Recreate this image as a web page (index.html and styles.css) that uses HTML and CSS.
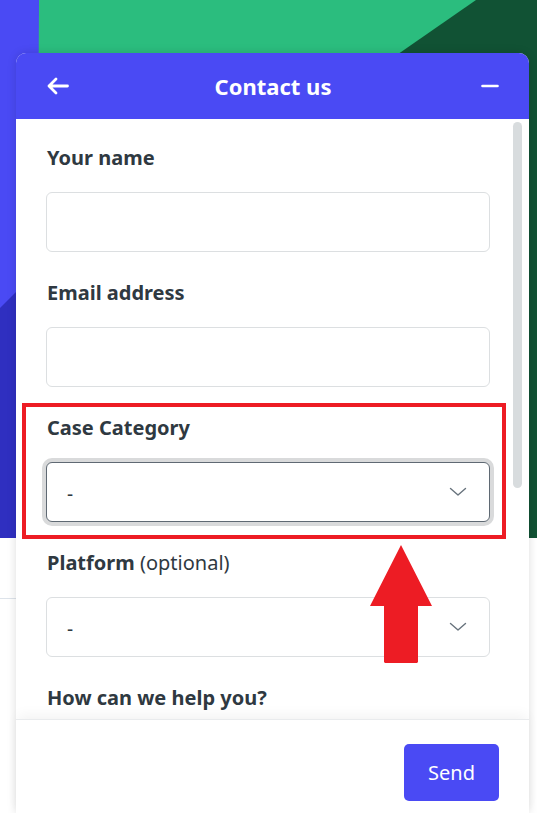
FILE: index.html
```html
<!DOCTYPE html>
<html lang="en">
<head>
<meta charset="utf-8">
<title>Contact us</title>
<link rel="stylesheet" href="styles.css">
</head>
<body>
<div class="page">
  <svg class="backdrop" width="537" height="813" viewBox="0 0 537 813" aria-hidden="true">
    <rect x="0" y="0" width="537" height="538" fill="#2bbd7e"/>
    <polygon points="476,0 537,0 537,538 -300,538" fill="#115234"/>
    <polygon points="0,0 39,0 36,538 0,538" fill="#4a4af4"/>
    <polygon points="0,308 37,271 36,538 0,538" fill="#2f2fc0"/>
    <rect x="0" y="538" width="537" height="275" fill="#ffffff"/>
    <rect x="0" y="598" width="20" height="1" fill="#dde3ea"/>
  </svg>

  <div class="widget">
    <header class="widget-header">
      <button class="icon-btn" aria-label="Back">
        <svg width="22" height="18" viewBox="0 0 22 18"><path d="M20.5 9H2 M9 2 L2 9 L9 16" fill="none" stroke="#fff" stroke-width="2.8" stroke-linecap="round" stroke-linejoin="round"/></svg>
      </button>
      <h1 class="title">Contact us</h1>
      <button class="icon-btn icon-right" aria-label="Minimize">
        <svg width="18" height="18" viewBox="0 0 18 18"><path d="M1.5 9H16.5" fill="none" stroke="#fff" stroke-width="2.6" stroke-linecap="round"/></svg>
      </button>
    </header>

    <div class="widget-body">
      <form class="form">
        <div class="field">
          <label class="label">Your name</label>
          <input class="input" type="text">
        </div>
        <div class="field">
          <label class="label">Email address</label>
          <input class="input" type="email">
        </div>
        <div class="field">
          <label class="label">Case Category</label>
          <div class="select is-focused">
            <span class="select-value">-</span>
            <svg class="chevron" width="18" height="10" viewBox="0 0 18 10"><path d="M1.5 1.5 L9 8 L16.5 1.5" fill="none" stroke="#68737d" stroke-width="1.4" stroke-linecap="round" stroke-linejoin="round"/></svg>
          </div>
        </div>
        <div class="field">
          <label class="label">Platform <span class="optional">(optional)</span></label>
          <div class="select">
            <span class="select-value">-</span>
            <svg class="chevron" width="18" height="10" viewBox="0 0 18 10"><path d="M1.5 1.5 L9 8 L16.5 1.5" fill="none" stroke="#68737d" stroke-width="1.4" stroke-linecap="round" stroke-linejoin="round"/></svg>
          </div>
        </div>
        <div class="field">
          <label class="label">How can we help you?</label>
          <textarea class="input textarea"></textarea>
        </div>
      </form>
      <div class="scrolltrack"><div class="scrollthumb"></div></div>
    </div>

    <footer class="widget-footer">
      <button class="send" type="button">Send</button>
    </footer>
  </div>

  <div class="highlight"></div>
  <svg class="pointer" width="63" height="119" viewBox="0 0 63 119" aria-hidden="true">
    <polygon points="31,0 62,61 48,61 48,117 47,118 15,118 14,117 14,61 0,61" fill="#ed1c24"/>
  </svg>
</div>
</body>
</html>
```

FILE: styles.css
```css
* { box-sizing: border-box; }

html, body {
  margin: 0;
  padding: 0;
  overflow: hidden;
  background: #ffffff;
  font-family: "Noto Sans", "Open Sans", "DejaVu Sans", sans-serif;
  color: #2f3941;
}

.page {
  position: relative;
  width: 537px;
  height: 813px;
  overflow: hidden;
}

.backdrop {
  position: absolute;
  left: 0;
  top: 0;
  display: block;
}

.widget {
  position: relative;
  margin: 53px 0 0 16px;
  width: 513px;
  height: 760px;
  background: #ffffff;
  border-radius: 10px 10px 0 0;
  box-shadow: 0 0 10px rgba(0, 0, 0, 0.14);
  display: flex;
  flex-direction: column;
}

.widget-header {
  height: 66px;
  flex: none;
  background: #4a4af4;
  border-radius: 10px 10px 0 0;
  display: grid;
  grid-template-columns: 1fr auto 1fr;
  align-items: center;
  padding: 0 30px 0 31px;
}

.icon-btn {
  background: none;
  border: 0;
  padding: 0;
  margin: 0;
  width: 24px;
  height: 24px;
  display: flex;
  align-items: center;
  justify-content: flex-start;
  cursor: pointer;
}
.icon-btn svg { display: block; }
.icon-right {
  justify-self: end;
  justify-content: flex-end;
}

.title {
  margin: 0;
  color: #ffffff;
  font-size: 22px;
  font-weight: 700;
  line-height: 28px;
  text-align: center;
}

.widget-body {
  height: 600px;
  flex: none;
  display: flex;
}

.form {
  flex: 1;
  overflow: hidden;
  padding: 27px 23px 0 30px;
  margin: 0;
}

.field {
  margin-bottom: 29px;
}

.label {
  display: block;
  font-size: 20px;
  font-weight: 700;
  line-height: 24px;
  margin: 0 0 22px 1px;
  color: #2f3941;
}

.optional {
  font-weight: 400;
}

.input {
  display: block;
  width: 100%;
  height: 60px;
  border: 1px solid #dcdfe1;
  border-radius: 6px;
  background: #ffffff;
  font-family: inherit;
  font-size: 19px;
  color: #2f3941;
  padding: 0 20px;
  outline: none;
}

.textarea {
  height: 120px;
  resize: none;
}

.select {
  height: 60px;
  border: 1px solid #dcdfe1;
  border-radius: 6px;
  background: #ffffff;
  display: flex;
  align-items: center;
  justify-content: space-between;
  padding: 0 22px 0 20px;
}

.select.is-focused {
  border: 1.5px solid #5f6973;
  box-shadow: 0 0 0 4px #d9dadb;
}

.select-value {
  font-size: 19px;
  line-height: 24px;
  color: #2f3941;
  padding-top: 4px;
}

.chevron { display: block; }

.scrolltrack {
  width: 9px;
  flex: none;
  margin: 3px 7px 0 0;
}

.scrollthumb {
  height: 366px;
  background: #d8dcde;
  border-radius: 5px;
}

.widget-footer {
  position: relative;
  z-index: 1;
  flex: none;
  height: 94px;
  border-top: 1px solid #e9ebed;
  background: #ffffff;
  box-shadow: 0 -6px 12px -2px rgba(0, 0, 0, 0.05);
  display: flex;
  justify-content: flex-end;
  align-items: flex-start;
  padding: 24px 30px 0 0;
}

.send {
  height: 57px;
  padding: 0 24px;
  border: 0;
  border-radius: 5px;
  background: #4a4af4;
  color: #ffffff;
  font-family: inherit;
  font-size: 20px;
  font-weight: 400;
  cursor: pointer;
}

.highlight {
  position: absolute;
  left: 22px;
  top: 403px;
  width: 484px;
  height: 136px;
  border: 4px solid #ed1c24;
  pointer-events: none;
}

.pointer {
  position: absolute;
  left: 370px;
  top: 545px;
  display: block;
}
```
